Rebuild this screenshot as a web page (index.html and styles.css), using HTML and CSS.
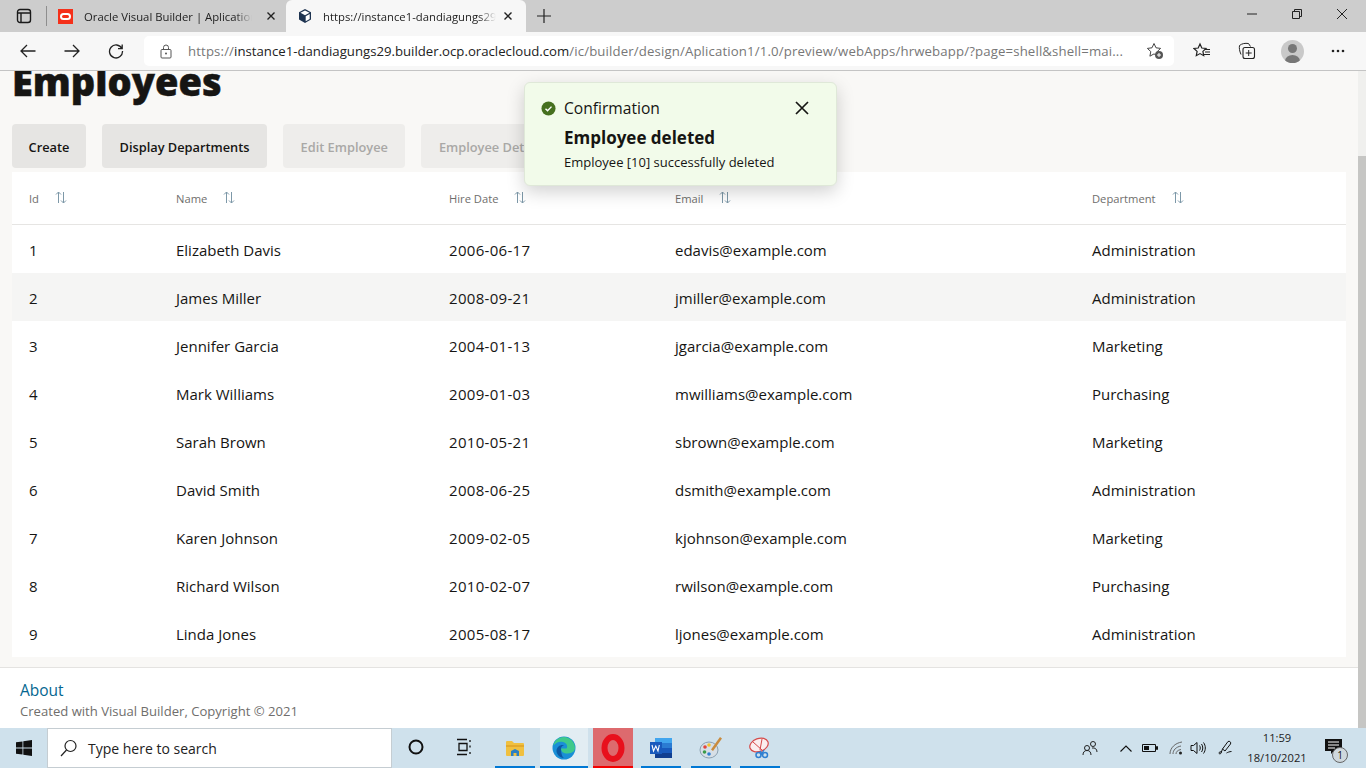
FILE: index.html
```html
<!doctype html>
<html>
<head>
<meta charset="utf-8">
<title>Employees</title>
<link rel="stylesheet" href="styles.css">
</head>
<body>
<div class="tabstrip">
	<svg class="tabs-btn" width="16" height="16" viewBox="0 0 16 16"><rect x="1.5" y="1.5" width="13" height="13" rx="2.5" fill="none" stroke="#1a1a1a" stroke-width="1.4"/><path d="M1.5 5h13M5 5v9" stroke="#1a1a1a" stroke-width="1.4" fill="none"/></svg>
	<span class="tab-sep"></span>
	<div class="tab">
		<span class="fav-oracle"><i></i></span>
		<span class="tab-title">Oracle Visual Builder | Aplication1</span>
		<svg class="tab-x" width="10" height="10" viewBox="0 0 10 10"><path d="M1.5 1.5l7 7M8.500 1.500l-7 7" stroke="#222" stroke-width="1.4"/></svg>
	</div>
	<div class="tab tab-on">
		<svg width="16" height="16" viewBox="0 0 16 16"><path d="M8 1l6 3.200v7.300L8 15l-6-3.500V4.200z" fill="#1d3350"/><path d="M8 2.500l4.500 2.300L8 7.200 3.500 4.800z" fill="#fff"/><path d="M8.700 8.300l4-2.200v4.900l-4 2.300z" fill="#fff"/></svg>
		<span class="tab-title">https://instance1-dandiagungs29.builder</span>
		<svg class="tab-x" width="10" height="10" viewBox="0 0 10 10"><path d="M1.500 1.500l7 7M8.500 1.500l-7 7" stroke="#222" stroke-width="1.400"/></svg>
	</div>
	<svg class="tab-plus" width="14" height="14" viewBox="0 0 14 14"><path d="M7 0v14M0 7h14" stroke="#222" stroke-width="1.200"/></svg>
	<div class="win-btns">
		<svg width="12" height="12" viewBox="0 0 12 12"><path d="M1 6h10" stroke="#222" stroke-width="1"/></svg>
		<svg width="12" height="12" viewBox="0 0 12 12"><path d="M1.500 3.500h7v7h-7zM3.500 3.500v-2h7v7h-2" fill="none" stroke="#222" stroke-width="1"/></svg>
		<svg width="12" height="12" viewBox="0 0 12 12"><path d="M1 1l10 10M11 1L1 11" stroke="#222" stroke-width="1"/></svg>
	</div>
</div>
<div class="toolbar">
	<svg class="nav-icon" width="16" height="16" viewBox="0 0 16 16"><path d="M15.500 8H1M7 2L1 8l6 6" fill="none" stroke="#222" stroke-width="1.300"/></svg>
	<svg class="nav-icon" width="16" height="16" viewBox="0 0 16 16"><path d="M.5 8H15M9 2l6 6-6 6" fill="none" stroke="#222" stroke-width="1.300"/></svg>
	<svg class="nav-icon" width="16" height="16" viewBox="0 0 16 16"><path d="M13.800 5.500A6.500 6.500 0 1 0 14.500 8M14.200 1.500v4.200H10" fill="none" stroke="#222" stroke-width="1.300"/></svg>
	<div class="address">
		<svg width="12" height="15" viewBox="0 0 12 15"><rect x="1" y="5.500" width="10" height="8.500" rx="1" fill="none" stroke="#555" stroke-width="1"/><path d="M3.500 5.500V3.500a2.500 2.500 0 0 1 5 0v2" fill="none" stroke="#555"/><circle cx="6" cy="9.500" r="1" fill="#555"/></svg>
		<span class="url"><span class="url-dim">https://</span>instance1-dandiagungs29.builder.ocp.oraclecloud.com<span class="url-dim">/ic/builder/design/Aplication1/1.0/preview/webApps/hrwebapp/?page=shell&amp;shell=mai...</span></span>
		<svg width="18" height="18" viewBox="0 0 18 18"><path d="M8 1.500l2 4.300 4.600.6-3.400 3.200.9 4.600L8 11.900l-4.100 2.300.9-4.600L1.400 6.400 6 5.800z" fill="none" stroke="#444"/><circle cx="13" cy="13" r="4" fill="#555"/><path d="M13 11v4M11 13h4" stroke="#fff"/></svg>
	</div>
	<div class="tool-icons">
		<svg width="18" height="18" viewBox="0 0 18 18"><path d="M7 2l1.800 4 4.200.5-3.100 2.900.8 4.300L7 11.600l-3.700 2.100.8-4.300L1 6.500 5.200 6z" fill="none" stroke="#222" stroke-width="1.200"/><path d="M12 7.500h5M12 10h5M11 12.500h6" stroke="#222"/></svg>
		<svg width="18" height="18" viewBox="0 0 18 18"><path d="M3 12.500C1.500 9 1 6 1.500 3.500 4 1.500 7 1 10.500 1.500l2 3" fill="none" stroke="#222"/><rect x="5" y="5.500" width="11.500" height="11" rx="2" fill="#f7f7f7" stroke="#222" stroke-width="1.100"/><path d="M10.700 8v6M7.700 11h6" stroke="#222"/></svg>
		<span class="avatar"><i class="avatar-head"></i><i class="avatar-body"></i></span>
		<svg class="tool-more" width="14" height="4" viewBox="0 0 14 4"><circle cx="2" cy="2" r="1.300" fill="#222"/><circle cx="7" cy="2" r="1.300" fill="#222"/><circle cx="12" cy="2" r="1.300" fill="#222"/></svg>
	</div>
</div>
<div class="viewport">
	<div class="page">
		<main class="content">
			<h1 class="page-title">Employees</h1>
			<div class="actions">
				<button class="btn">Create</button>
				<button class="btn">Display Departments</button>
				<button class="btn btn-off">Edit Employee</button>
				<button class="btn btn-off">Employee Details</button>
			</div>
			<table class="grid">
				<colgroup><col class="c-id"><col class="c-name"><col class="c-hire"><col class="c-mail"><col></colgroup>
				<thead>
					<tr>
						<th>Id<svg class="sort" width="12" height="13" viewBox="0 0 12 13"><path d="M3.500 12V1M1 3.500L3.500 1 6 3.500" fill="none" stroke="#7d98a8"/><path d="M8.500 1v11M6 9.500L8.500 12 11 9.500" fill="none" stroke="#7d98a8"/></svg></th>
						<th>Name<svg class="sort" width="12" height="13" viewBox="0 0 12 13"><path d="M3.500 12V1M1 3.500L3.500 1 6 3.500" fill="none" stroke="#7d98a8"/><path d="M8.500 1v11M6 9.500L8.500 12 11 9.500" fill="none" stroke="#7d98a8"/></svg></th>
						<th>Hire Date<svg class="sort" width="12" height="13" viewBox="0 0 12 13"><path d="M3.500 12V1M1 3.500L3.500 1 6 3.500" fill="none" stroke="#7d98a8"/><path d="M8.500 1v11M6 9.500L8.500 12 11 9.500" fill="none" stroke="#7d98a8"/></svg></th>
						<th>Email<svg class="sort" width="12" height="13" viewBox="0 0 12 13"><path d="M3.500 12V1M1 3.500L3.500 1 6 3.500" fill="none" stroke="#7d98a8"/><path d="M8.500 1v11M6 9.500L8.500 12 11 9.500" fill="none" stroke="#7d98a8"/></svg></th>
						<th>Department<svg class="sort" width="12" height="13" viewBox="0 0 12 13"><path d="M3.500 12V1M1 3.500L3.500 1 6 3.500" fill="none" stroke="#7d98a8"/><path d="M8.500 1v11M6 9.500L8.500 12 11 9.500" fill="none" stroke="#7d98a8"/></svg></th>
					</tr>
				</thead>
				<tbody>
					<tr><td>1</td><td>Elizabeth Davis</td><td class="date">2006-06-17</td><td>edavis@example.com</td><td>Administration</td></tr>
					<tr class="row-hover"><td>2</td><td>James Miller</td><td class="date">2008-09-21</td><td>jmiller@example.com</td><td>Administration</td></tr>
					<tr><td>3</td><td>Jennifer Garcia</td><td class="date">2004-01-13</td><td>jgarcia@example.com</td><td>Marketing</td></tr>
					<tr><td>4</td><td>Mark Williams</td><td class="date">2009-01-03</td><td>mwilliams@example.com</td><td>Purchasing</td></tr>
					<tr><td>5</td><td>Sarah Brown</td><td class="date">2010-05-21</td><td>sbrown@example.com</td><td>Marketing</td></tr>
					<tr><td>6</td><td>David Smith</td><td class="date">2008-06-25</td><td>dsmith@example.com</td><td>Administration</td></tr>
					<tr><td>7</td><td>Karen Johnson</td><td class="date">2009-02-05</td><td>kjohnson@example.com</td><td>Marketing</td></tr>
					<tr><td>8</td><td>Richard Wilson</td><td class="date">2010-02-07</td><td>rwilson@example.com</td><td>Purchasing</td></tr>
					<tr><td>9</td><td>Linda Jones</td><td class="date">2005-08-17</td><td>ljones@example.com</td><td>Administration</td></tr>
				</tbody>
			</table>
		</main>
		<footer class="foot">
			<a class="foot-link" href="#">About</a>
			<div class="foot-copy">Created with Visual Builder, Copyright © 2021</div>
		</footer>
		<div class="toast">
			<div class="toast-head">
				<svg width="15" height="15" viewBox="0 0 16 16"><circle cx="8" cy="8" r="7.500" fill="#46701f"/><path d="M4.800 8.200l2.200 2.200 4.200-4.400" fill="none" stroke="#fff" stroke-width="1.500"/></svg>
				<span class="toast-kind">Confirmation</span>
				<svg class="toast-x" width="14" height="14" viewBox="0 0 14 14"><path d="M1 1l12 12M13 1L1 13" stroke="#161513" stroke-width="1.700"/></svg>
			</div>
			<div class="toast-title">Employee deleted</div>
			<div class="toast-msg">Employee [10] successfully deleted</div>
		</div>
	</div>
	<div class="scrollbar"><div class="scroll-thumb"></div></div>
</div>
<div class="taskbar">
	<svg class="start" width="16" height="16" viewBox="0 0 16 16"><path d="M0 2.300l6.500-.9v6.200H0zM7.300 1.300L16 0v7.600H7.300zM0 8.400h6.500v6.200L0 13.700zM7.300 8.400H16V16l-8.700-1.300z" fill="#111"/></svg>
	<div class="search">
		<svg width="18" height="18" viewBox="0 0 18 18"><circle cx="10.500" cy="7" r="5.500" fill="none" stroke="#222" stroke-width="1.200"/><path d="M6.500 11L1 17" stroke="#222" stroke-width="1.200"/></svg>
		<span>Type here to search</span>
	</div>
	<div class="task-icons">
		<span class="task"><svg width="16" height="16" viewBox="0 0 16 16"><circle cx="8" cy="8" r="6.500" fill="none" stroke="#111" stroke-width="2"/></svg></span>
		<span class="task"><svg width="18" height="18" viewBox="0 0 18 18"><path d="M2 1.500h10M4 5.500h8v7H4zM2 16.500h10M15 2v2M15 7.500v2M15 14v2" fill="none" stroke="#111" stroke-width="1.300"/></svg></span>
		<span class="task task-run task-files"><svg width="20" height="18" viewBox="0 0 20 18"><path d="M1 3a1 1 0 0 1 1-1h5l2 2h9a1 1 0 0 1 1 1v11a1 1 0 0 1-1 1H2a1 1 0 0 1-1-1z" fill="#f0c040"/><path d="M1 6h18v2H1z" fill="#e3a92c"/><path d="M6 17v-5l4-2 4 2v5h-2.500v-3h-3v3z" fill="#2a7fc4"/></svg></span>
		<span class="task task-run task-edge"><svg width="24" height="24" viewBox="0 0 24 24"><circle cx="12" cy="12" r="11.500" fill="#1a8fd6"/><path d="M23 12c0-6-5-11-11-11C6.500 1 2 5 1.500 9.500 4 6 8 5 11 6c4 1.200 5 4.500 3.500 6.500H9c0 3 2.500 5 6.500 5 2.500 0 4.500-.8 6-2 .9-1 1.500-2.200 1.500-3.500z" fill="#3fc98b"/><path d="M9 13c0-2 1.300-3.200 3-3.700-3.500-1-7 1.500-7.500 5C4.200 18 7.500 22 12 22c-2-1.200-3-5-3-9z" fill="#0c59a4"/></svg></span>
		<span class="task task-run task-opera"><svg width="24" height="28" viewBox="0 0 24 28"><ellipse cx="12" cy="14" rx="8.500" ry="11" fill="none" stroke="#e8101c" stroke-width="6"/></svg></span>
		<span class="task task-run task-word"><svg width="24" height="22" viewBox="0 0 24 22"><rect x="6" y="1" width="17" height="20" rx="1" fill="#2b7cd3"/><rect x="6" y="1" width="17" height="5" fill="#41a5ee"/><rect x="6" y="11" width="17" height="5" fill="#185abd"/><rect x="6" y="16" width="17" height="5" fill="#103f91"/><rect x="1" y="5" width="12" height="12" fill="#185abd"/><path d="M3 8l1.500 6L6.800 9l2.200 5 1.300-6" fill="none" stroke="#fff" stroke-width="1.100"/></svg></span>
		<span class="task task-run task-paint"><svg width="24" height="24" viewBox="0 0 24 24"><ellipse cx="10" cy="14" rx="9" ry="8" fill="#d7dfe6" stroke="#8ba0b0"/><circle cx="6" cy="11" r="1.800" fill="#e2453c"/><circle cx="10" cy="9" r="1.800" fill="#f2c230"/><circle cx="5.500" cy="16" r="1.800" fill="#3b9b4a"/><circle cx="10" cy="18" r="1.800" fill="#2f7fd1"/><path d="M21 1l2 1.500L14 15l-2-1.500z" fill="#c98b3e"/></svg></span>
		<span class="task task-run task-snip"><svg width="24" height="24" viewBox="0 0 24 24"><ellipse cx="11" cy="9" rx="9.500" ry="6.500" fill="#fbeeee" stroke="#d64a4a" stroke-width="1.200" transform="rotate(-20 11 9)"/><path d="M5 6l9 8M14 3l-2 11" stroke="#d64a4a"/><circle cx="10.500" cy="19" r="2.500" fill="none" stroke="#2f7fd1" stroke-width="1.500"/><circle cx="17" cy="19" r="2.500" fill="none" stroke="#2f7fd1" stroke-width="1.500"/><path d="M12 15l3 4M16 14l-3 5" stroke="#2f7fd1" stroke-width="1.300"/></svg></span>
	</div>
	<div class="tray">
		<svg class="tray-people" width="18" height="16" viewBox="0 0 16 16"><circle cx="5" cy="8" r="2.500" fill="none" stroke="#222"/><path d="M1 15c0-3 1.500-4.500 4-4.500S9 12 9 15" fill="none" stroke="#222"/><circle cx="11" cy="4" r="2.500" fill="none" stroke="#222"/><path d="M10 8c3-.5 5 1 5 4" fill="none" stroke="#222"/></svg>
		<svg class="tray-chev" width="12" height="7" viewBox="0 0 12 7"><path d="M.5 6.500L6 1l5.500 5.500" fill="none" stroke="#111" stroke-width="1.100"/></svg>
		<svg class="tray-batt" width="16" height="10" viewBox="0 0 16 10"><path d="M.5 1.500h13v7H.5zM14.500 3.500h1v3h-1z" fill="none" stroke="#111"/><rect x="2" y="3" width="5" height="4" fill="#111"/></svg>
		<svg class="tray-wifi" width="15" height="14" viewBox="0 0 15 14"><path d="M1 13C1 7 6 2 13 1M4 13c0-4 3-7 8-8M7 13c0-2 1.500-4 5-4.500" fill="none" stroke="#666"/><circle cx="11.500" cy="12" r="1.500" fill="#222"/></svg>
		<svg class="tray-sound" width="16" height="14" viewBox="0 0 16 14"><path d="M1 4.500h2.500L7 1.500v11l-3.500-3H1z" fill="none" stroke="#111"/><path d="M9.500 4.500c1 1.500 1 3.500 0 5M11.500 3c1.700 2.300 1.700 5.700 0 8M13.500 1.500c2.400 3.300 2.400 7.700 0 11" fill="none" stroke="#111"/></svg>
		<svg class="tray-pen" width="16" height="16" viewBox="0 0 16 16"><path d="M10 1.500c1.500-1 3.500 1 2.500 2.500L7 11l-2.500-2zM4.500 9L3 13c-.5 1.500-2 1-2 0s1.500-1.500 3-1M8.500 13c1-.5 3-1.500 5-1.500" fill="none" stroke="#111"/></svg>
		<div class="clock"><div>11:59</div><div>18/10/2021</div></div>
		<span class="notif">
			<svg width="17" height="15" viewBox="0 0 17 15"><path d="M0 0h17v12H9l-3 3v-3H0z" fill="#111"/><path d="M3 3h11M3 6h11M3 9h7" stroke="#fff"/></svg>
			<span class="notif-badge">1</span>
		</span>
	</div>
</div>
</body>
</html>
```
FILE: styles.css
```css
*{ margin:0; padding:0; box-sizing:border-box;}
html,body{ height:100%; overflow:hidden;}
body{ display:flex; flex-direction:column; width:1366px; height:768px; font-family:"Open Sans","Noto Sans","Liberation Sans",sans-serif; color:#161513; background:#fff;}
svg{ display:block; flex:none;}

/* browser tabs */
.tabstrip{ height:32px; flex:none; background:#cdcdcd; display:flex; align-items:flex-end; padding-left:16px; position:relative;}
.tabs-btn{ align-self:center; margin-right:14px; margin-top:-1px;}
.tab-sep{ width:1px; height:20px; background:#8e8e8e; align-self:center; margin-right:5px;}
.tab{ width:237px; height:32px; display:flex; align-items:center; padding:0 13px 0 6px; gap:11px; font-size:11.300px;}
.tab-on{ width:240px; background:#f7f7f7; border-radius:6px 6px 0 0; padding:0 13px 0 11px; gap:10px; margin-left:-3px;}
.tab-title{ flex:1; overflow:hidden; white-space:nowrap; color:#222; -webkit-mask-image:linear-gradient(to right,#000 90%,transparent);}
.tab-x{ margin-left:3px;}
.tab-on .tab-title{ margin-right:-6px;}
.fav-oracle{ width:15px; height:15px; background:#f5301a; display:flex; align-items:center; justify-content:center; flex:none;}
.fav-oracle i{ display:block; width:11px; height:7px; border:2px solid #fff; border-radius:4px;}
.tab-plus{ align-self:center; margin-left:11px;}
.win-btns{ margin-left:auto; align-self:flex-start; display:flex; gap:33px; padding:8px 18px 0 0;}

/* address bar */
.toolbar{ height:39px; flex:none; background:#f7f7f7; border-bottom:1px solid #c4c4c4; display:flex; align-items:center; padding:0 0 0 20px;}
.nav-icon{ margin-right:28px;}
.address{ width:1030px; height:30px; margin-left:-8px; background:#fff; border-radius:5px; display:flex; align-items:center; padding:0 10px 0 16px; gap:16px; font-size:13.200px;}
.url{ flex:1; white-space:nowrap; overflow:hidden; color:#222;}
.url-dim{ color:#777; letter-spacing:.14px;}
.tool-icons{ display:flex; align-items:center; margin-left:19px; gap:27px;}
.tool-more{ margin-left:2px;}
.avatar{ width:23px; height:23px; border-radius:50%; background:#c9c9c9; position:relative; overflow:hidden; margin:0 -2px;}
.avatar-head{ position:absolute; left:7px; top:4px; width:9px; height:9px; border-radius:50%; background:#777;}
.avatar-body{ position:absolute; left:4px; top:15px; width:15px; height:12px; border-radius:50%; background:#777;}

/* page */
.viewport{ flex:1; display:flex; min-height:0;}
.page{ flex:1; display:flex; flex-direction:column; position:relative; min-width:0; overflow:hidden;}
.content{ flex:1; background:#f9f8f6; padding:0 12px; min-height:0; border-bottom:1px solid #e4e3e1;}
.page-title{ font-size:38px; line-height:20px; font-weight:800; height:33px; -webkit-text-stroke:.5px #161513;}
.actions{ display:flex; gap:16px; margin-top:20px; height:44px;}
.btn{ height:44px; padding:1px 17.500px 0; border:0; border-radius:4px; background:#e6e5e3; color:#161513; font:600 12.800px "Open Sans","Noto Sans",sans-serif;}
.btn:first-child{ width:74px; padding:1px 0 0;}
.btn-off{ background:#eeedeb; color:#a9a8a6;}
.grid{ width:1334px; margin-top:4px; border-collapse:separate; border-spacing:0; table-layout:fixed; background:#fff;}
.c-id{ width:147px;}
.c-name{ width:273px;}
.c-hire{ width:226px;}
.c-mail{ width:417px;}
.grid th{ height:53px; padding-left:17px; text-align:left; font-size:11.200px; font-weight:400; color:#6f6e6c; border-bottom:1px solid #e6e5e3; white-space:nowrap;}
.grid td{ height:48px; padding:2px 0 0 17px; font-size:15px; color:#161513; white-space:nowrap;}
.grid .date{ letter-spacing:.3px;}
.row-hover td{ background:#f5f5f4;}
.sort{ display:inline-block; vertical-align:-1px; margin-left:16px;}
.foot{ height:60px; flex:none; background:#fff; padding:12px 20px 0;}
.foot-link{ display:block; font-size:15.500px; line-height:20px; color:#04668f; text-decoration:none;}
.foot-copy{ font-size:13.100px; line-height:20px; color:#6f6e6c; margin-top:1px;}

/* toast */
.toast{ position:absolute; left:524px; top:11px; width:313px; height:104px; background:#f2fbea; border:1px solid #dfe8d8; border-radius:6px; box-shadow:0 6px 18px rgba(0,0,0,.18); padding:14px 16px 0;}
.toast-head{ display:flex; align-items:center; height:22px; font-size:15.600px;}
.toast-kind{ margin-left:8px;}
.toast-x{ margin-left:auto; margin-right:11px;}
.toast-title{ font-size:17px; font-weight:700; line-height:24px; margin:7px 0 0 23px;}
.toast-msg{ font-size:13px; line-height:18px; margin:3px 0 0 23px;}

/* scrollbar */
.scrollbar{ width:8px; flex:none; background:#f0f0ee; padding-top:85px;}
.scroll-thumb{ height:572px; background:#c6c6c4;}

/* windows taskbar */
.taskbar{ height:40px; flex:none; background:#cfe1ec; display:flex; align-items:center; padding-left:16px;}
.start{ margin-right:15px;}
.search{ width:345px; height:40px; background:#fff; border:1px solid #c5cdd2; display:flex; align-items:center; gap:10px; padding-left:12px; font-size:14px; color:#222;}
.task-icons{ display:flex; height:40px;}
.task{ width:48px; height:40px; display:flex; align-items:center; justify-content:center; border-bottom:2px solid transparent;}
.task-run{ width:40px; border-bottom-color:#0078d4;}
.task-run svg{ margin-top:2px;}
.task-files{ margin-left:7px;}
.task-edge{ width:48px; margin-left:5px; background:#e2edf3;}
.task-opera{ margin-left:5px; background:#dd6a6e; border-bottom-color:#f30000;}
.task-word{ margin-left:8px;}
.task-paint{ margin-left:10px;}
.task-snip{ margin-left:9px;}
.tray{ margin-left:auto; display:flex; align-items:center; padding-right:17px;}
.tray-chev{ margin-left:21px;}
.tray-batt{ margin-left:10px;}
.tray-wifi{ margin-left:11px;}
.tray-sound{ margin-left:6px;}
.tray-pen{ margin-left:12px;}
.clock{ width:60px; margin-left:13px; font-size:11.200px; line-height:20px; text-align:center; color:#222;}
.notif{ position:relative; width:26px; height:28px; margin-left:16px;}
.notif svg{ margin:5px 0 0 2px;}
.notif-badge{ position:absolute; left:9px; top:13px; width:16px; height:16px; border-radius:50%; background:#cfd8dd; border:1px solid #666; font-size:10px; line-height:14px; text-align:center; color:#111;}
```
